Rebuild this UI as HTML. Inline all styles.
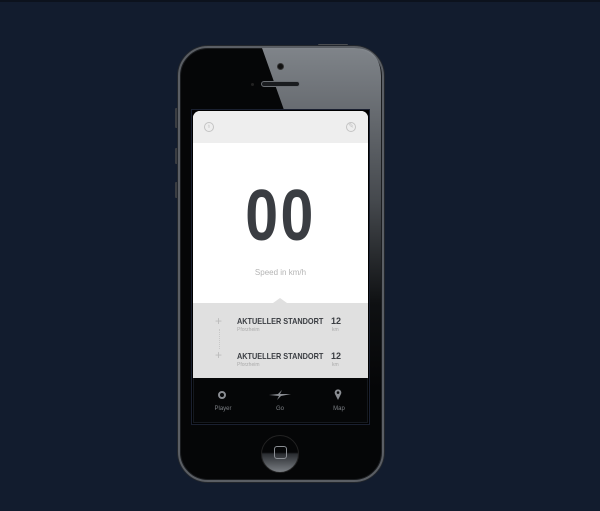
<!DOCTYPE html>
<html><head><style>
*{margin:0;padding:0;box-sizing:border-box}
body{width:600px;height:511px;background:#121c2e;position:relative;overflow:hidden;font-family:"Liberation Sans",sans-serif}
.abs{position:absolute}
.t{font-weight:bold;font-size:8.5px;color:#3a3d42;transform:scaleX(0.86);transform-origin:left top;white-space:nowrap}
</style></head><body>
<div class="abs" style="left:0;top:0;width:600px;height:2px;background:#0c121d"></div>
<div class="abs" style="left:175px;top:108px;width:4px;height:20px;background:#3a3d42;border-radius:1px"></div>
<div class="abs" style="left:175px;top:148px;width:4px;height:16px;background:#3a3d42;border-radius:1px"></div>
<div class="abs" style="left:175px;top:182px;width:4px;height:16px;background:#3a3d42;border-radius:1px"></div>
<div class="abs" style="left:318px;top:44px;width:30px;height:3px;background:#4a4d52;border-radius:1px"></div>
<div class="abs" style="left:178px;top:46px;width:206px;height:436px;border-radius:30px;background:#050607;border:2px solid #5a5e64;box-shadow:inset 0 0 0 1px #1b1d20,0 0 0 1px #22262c"></div>
<svg class="abs" style="left:180px;top:48px" width="202" height="432">
<defs><linearGradient id="g" x1="0" y1="0" x2="0" y2="1"><stop offset="0" stop-color="#8d9298"/><stop offset="0.45" stop-color="#4c5055"/><stop offset="0.75" stop-color="#101214"/><stop offset="1" stop-color="#050607"/></linearGradient></defs>
<path d="M82 0 L174 0 Q200 0 201 28 L201 340 L160 340 L160 62 L104 62 Z" fill="url(#g)" opacity="0.9"/>
</svg>
<div class="abs" style="left:277px;top:63px;width:7px;height:7px;border-radius:50%;background:#111;border:1px solid #333"></div>
<div class="abs" style="left:261px;top:81px;width:39px;height:6px;border-radius:3px;background:#1a1c1f;border:1px solid #6a6e73"></div>
<div class="abs" style="left:251px;top:83px;width:3px;height:3px;border-radius:50%;background:#222"></div>
<div class="abs" style="left:191px;top:109px;width:179px;height:316px;background:#000;border:1px solid #1a2030"></div>
<div class="abs" style="left:193px;top:111px;width:175px;height:267px;background:#fff;border-radius:7px 7px 0 0;overflow:hidden">
  <div class="abs" style="left:0;top:0;width:175px;height:32px;background:#eeeeee"></div>
  <div class="abs" style="left:11px;top:11px;width:10px;height:10px;border-radius:50%;border:1px solid #c4c4c4;color:#c4c4c4;font-size:7px;line-height:8px;text-align:center">♁</div>
  <div class="abs" style="left:153px;top:11px;width:10px;height:10px;border-radius:50%;border:1px solid #c4c4c4;color:#c4c4c4;font-size:7px;line-height:8px;text-align:center">✎</div>
  <div class="abs" style="left:0;top:69px;width:175px;text-align:center;font-weight:bold;font-size:72px;line-height:72px;color:#3a3d42;transform:scaleX(0.82);letter-spacing:3px">00</div>
  <div class="abs" style="left:0;top:157px;width:175px;text-align:center;font-size:8px;color:#b4b4b4">Speed in km/h</div>
  <div class="abs" style="left:0;top:192px;width:175px;height:75px;background:#e0e0e0"></div>
  <div class="abs" style="left:80px;top:187px;width:0;height:0;border-left:7px solid transparent;border-right:7px solid transparent;border-bottom:5px solid #e0e0e0"></div>
  <div class="abs" style="left:22px;top:203px;color:#bbb;font-size:12px">+</div>
  <div class="abs" style="left:26px;top:218px;height:20px;border-left:1px dotted #c8c8c8"></div>
  <div class="abs" style="left:22px;top:237px;color:#bbb;font-size:12px">+</div>
  <div class="abs t" style="left:44px;top:205px">AKTUELLER STANDORT</div>
  <div class="abs" style="left:44px;top:216px;font-size:5px;color:#aaa">Pforzheim</div>
  <div class="abs" style="left:138px;top:205px;font-weight:bold;font-size:9px;color:#3a3d42">12</div>
  <div class="abs" style="left:139px;top:216px;font-size:5px;color:#aaa">km</div>
  <div class="abs t" style="left:44px;top:240px">AKTUELLER STANDORT</div>
  <div class="abs" style="left:44px;top:251px;font-size:5px;color:#aaa">Pforzheim</div>
  <div class="abs" style="left:138px;top:240px;font-weight:bold;font-size:9px;color:#3a3d42">12</div>
  <div class="abs" style="left:139px;top:251px;font-size:5px;color:#aaa">km</div>
</div>
<div class="abs" style="left:193px;top:378px;width:175px;height:45px;background:#050607;border:1px solid #15191f;border-top:none"></div>
<div class="abs" style="left:218px;top:391px;width:8px;height:8px;border-radius:50%;border:2.5px solid #8a8d92"></div>
<svg class="abs" style="left:268px;top:390px" width="24" height="10"><path d="M1 5 L10 4 L14 0 L12 4 L23 4 L13 6 L9 10 L11 6 Z" fill="#8a8d92"/></svg>
<svg class="abs" style="left:334px;top:389px" width="8" height="11"><path d="M4 11 L1 5 A3.3 3.3 0 1 1 7 5 Z" fill="#8a8d92"/><circle cx="4" cy="3.6" r="1.3" fill="#050607"/></svg>
<div class="abs" style="left:203px;top:406px;width:40px;text-align:center;font-size:6px;color:#7d8085">Player</div>
<div class="abs" style="left:260px;top:406px;width:40px;text-align:center;font-size:6px;color:#7d8085">Go</div>
<div class="abs" style="left:319px;top:406px;width:40px;text-align:center;font-size:6px;color:#7d8085">Map</div>
<div class="abs" style="left:261px;top:435px;width:38px;height:38px;border-radius:50%;background:linear-gradient(#050607 0 45%,#2a2d31 50%,#7a7e83 100%);border:1px solid #222"></div>
<div class="abs" style="left:274px;top:446px;width:13px;height:13px;border-radius:3px;border:1.5px solid #8a8e93"></div>
</body></html>
